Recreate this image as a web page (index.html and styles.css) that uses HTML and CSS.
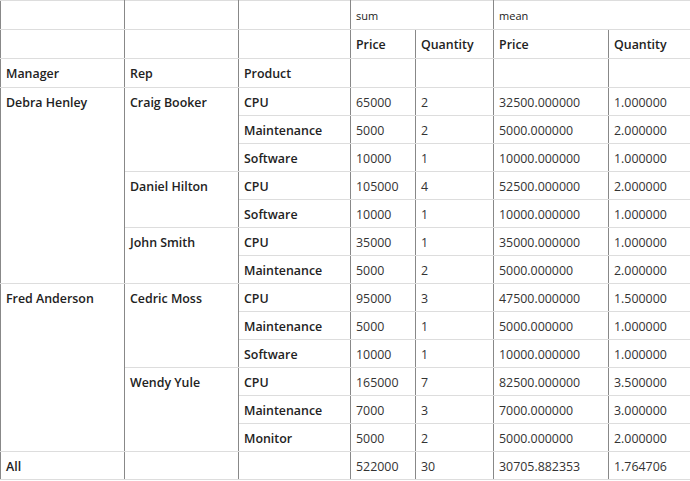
FILE: index.html
```html
<!DOCTYPE html>
<html>
<head>
<meta charset="utf-8">
<link rel="stylesheet" href="styles.css">
</head>
<body>
<table class="pivot">
  <colgroup>
    <col class="c1"><col class="c2"><col class="c3"><col class="c4"><col class="c5"><col class="c6"><col class="c7">
  </colgroup>
  <thead>
    <tr class="h1">
      <th></th><th></th><th></th>
      <th colspan="2" class="lvl">sum</th>
      <th colspan="2" class="lvl">mean</th>
    </tr>
    <tr class="h2">
      <th></th><th></th><th></th>
      <th>Price</th><th>Quantity</th><th>Price</th><th>Quantity</th>
    </tr>
    <tr class="h3">
      <th>Manager</th><th>Rep</th><th>Product</th>
      <th></th><th></th><th></th><th></th>
    </tr>
  </thead>
  <tbody>
    <tr>
      <th rowspan="7">Debra Henley</th>
      <th rowspan="3">Craig Booker</th>
      <th>CPU</th><td>65000</td><td>2</td><td>32500.000000</td><td>1.000000</td>
    </tr>
    <tr><th>Maintenance</th><td>5000</td><td>2</td><td>5000.000000</td><td>2.000000</td></tr>
    <tr><th>Software</th><td>10000</td><td>1</td><td>10000.000000</td><td>1.000000</td></tr>
    <tr>
      <th rowspan="2">Daniel Hilton</th>
      <th>CPU</th><td>105000</td><td>4</td><td>52500.000000</td><td>2.000000</td>
    </tr>
    <tr><th>Software</th><td>10000</td><td>1</td><td>10000.000000</td><td>1.000000</td></tr>
    <tr>
      <th rowspan="2">John Smith</th>
      <th>CPU</th><td>35000</td><td>1</td><td>35000.000000</td><td>1.000000</td>
    </tr>
    <tr><th>Maintenance</th><td>5000</td><td>2</td><td>5000.000000</td><td>2.000000</td></tr>
    <tr>
      <th rowspan="6">Fred Anderson</th>
      <th rowspan="3">Cedric Moss</th>
      <th>CPU</th><td>95000</td><td>3</td><td>47500.000000</td><td>1.500000</td>
    </tr>
    <tr><th>Maintenance</th><td>5000</td><td>1</td><td>5000.000000</td><td>1.000000</td></tr>
    <tr><th>Software</th><td>10000</td><td>1</td><td>10000.000000</td><td>1.000000</td></tr>
    <tr>
      <th rowspan="3">Wendy Yule</th>
      <th>CPU</th><td>165000</td><td>7</td><td>82500.000000</td><td>3.500000</td>
    </tr>
    <tr><th>Maintenance</th><td>7000</td><td>3</td><td>7000.000000</td><td>3.000000</td></tr>
    <tr><th>Monitor</th><td>5000</td><td>2</td><td>5000.000000</td><td>2.000000</td></tr>
    <tr>
      <th>All</th><th></th><th></th>
      <td>522000</td><td>30</td><td>30705.882353</td><td>1.764706</td>
    </tr>
  </tbody>
</table>
</body>
</html>
```
FILE: styles.css
```css
html, body {
  margin: 0;
  padding: 0;
  background: #ffffff;
}
.pivot {
  border-collapse: collapse;
  table-layout: fixed;
  width: 690px;
  font-family: "Open Sans", "DejaVu Sans", sans-serif;
  font-size: 12.4px;
  color: #222;
  border: 1px solid #777;
}
.c1 { width: 124px; }
.c2 { width: 114px; }
.c3 { width: 112px; }
.c4 { width: 65px; }
.c5 { width: 78px; }
.c6 { width: 115px; }
.c7 { width: 82px; }
.pivot th, .pivot td {
  border-left: 1px solid #888;
  border-right: 1px solid #888;
  border-top: 1px solid #ddd;
  border-bottom: 1px solid #ddd;
  padding: 3px 5px 0 5px;
  height: 27px;
  box-sizing: border-box;
  text-align: left;
  vertical-align: top;
  line-height: 24px;
  white-space: nowrap;
  overflow: hidden;
}
.pivot tbody tr {
  height: 28px;
}
.pivot thead tr {
  height: 29px;
}
.pivot thead th {
  padding-top: 2px;
  line-height: 26px;
}
.pivot th {
  font-weight: 600;
}
.pivot th.lvl {
  font-weight: 400;
  font-size: 11px;
}
.pivot td {
  font-weight: 400;
  color: #333;
}
```
